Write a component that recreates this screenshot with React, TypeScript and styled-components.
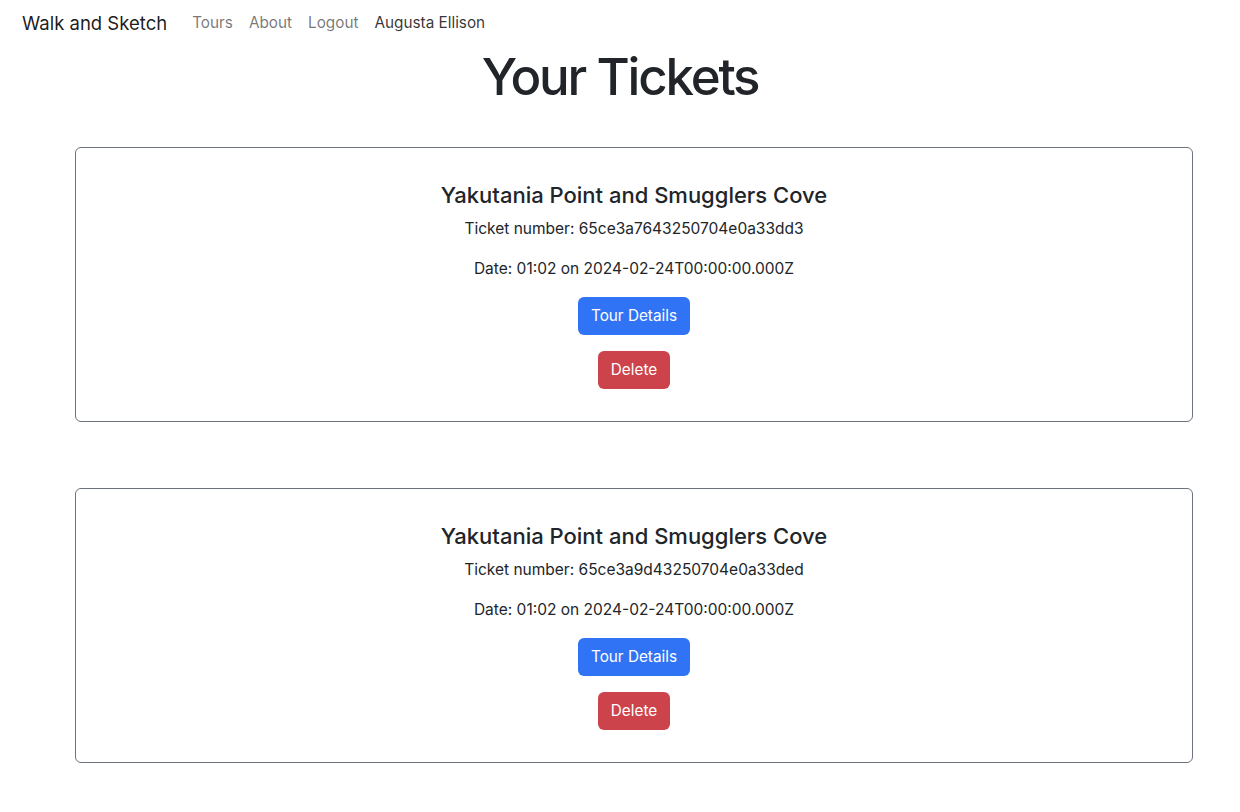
import React from "react";
import styled, { createGlobalStyle } from "styled-components";

const Global = createGlobalStyle`
  html, body { margin: 0; padding: 0; background: #fff; }
  body {
    font-family: Inter, "Noto Sans", "Liberation Sans", sans-serif;
    font-size: 16px;
    line-height: 1.5;
    color: #212529;
  }
  * { box-sizing: border-box; }
`;

const Navbar = styled.nav`
  display: flex;
  align-items: center;
  height: 44px;
  padding: 2px 0 0 22px;
`;

const Brand = styled.a`
  font-size: 18.5px;
  line-height: 30px;
  color: rgba(0, 0, 0, 0.9);
  text-decoration: none;
  margin-right: 17px;
`;

const NavLink = styled.a<{ $strong?: boolean }>`
  font-size: 15.3px;
  line-height: 24px;
  padding: 0 8px;
  text-decoration: none;
  color: ${(p) => (p.$strong ? "rgba(0,0,0,0.8)" : "rgba(0,0,0,0.55)")};
`;

const Title = styled.h1`
  margin: -1px 0 0;
  text-align: center;
  font-size: 51px;
  font-weight: 500;
  letter-spacing: -2.2px;
  line-height: 67px;
  color: #212529;
`;

const List = styled.div`
  display: flex;
  flex-direction: column;
  gap: 66px;
  padding: 37px 47px 40px 75px;
`;

const Card = styled.div`
  border: 1px solid #6c737c;
  border-radius: 6px;
  padding: 35px 16px 16px;
  display: flex;
  flex-direction: column;
  align-items: center;
  text-align: center;
`;

const CardTitle = styled.h5`
  margin: 0 0 10px;
  font-size: 22px;
  font-weight: 500;
  line-height: 24px;
  color: #212529;
`;

const Text = styled.p`
  margin: 0 0 16px;
  font-size: 15.5px;
  line-height: 24px;
`;

const Button = styled.button<{ $variant: "primary" | "danger" }>`
  font-family: inherit;
  font-size: 15.3px;
  line-height: 24px;
  padding: 6px 12px;
  border: 1px solid transparent;
  border-radius: 6px;
  color: #fff;
  background: ${(p) => (p.$variant === "primary" ? "#3074f5" : "#cd434c")};
  margin-bottom: 16px;
  cursor: pointer;
`;

const tickets = [
  { id: "65ce3a7643250704e0a33dd3" },
  { id: "65ce3a9d43250704e0a33ded" },
];

export default function App() {
  return (
    <>
      <Global />
      <Navbar>
        <Brand href="#">Walk and Sketch</Brand>
        <NavLink href="#">Tours</NavLink>
        <NavLink href="#">About</NavLink>
        <NavLink href="#">Logout</NavLink>
        <NavLink href="#" $strong>Augusta Ellison</NavLink>
      </Navbar>
      <Title>Your Tickets</Title>
      <List>
        {tickets.map((t) => (
          <Card key={t.id}>
            <CardTitle>Yakutania Point and Smugglers Cove</CardTitle>
            <Text>Ticket number: {t.id}</Text>
            <Text>Date: 01:02 on 2024-02-24T00:00:00.000Z</Text>
            <Button $variant="primary">Tour Details</Button>
            <Button $variant="danger">Delete</Button>
          </Card>
        ))}
      </List>
    </>
  );
}
